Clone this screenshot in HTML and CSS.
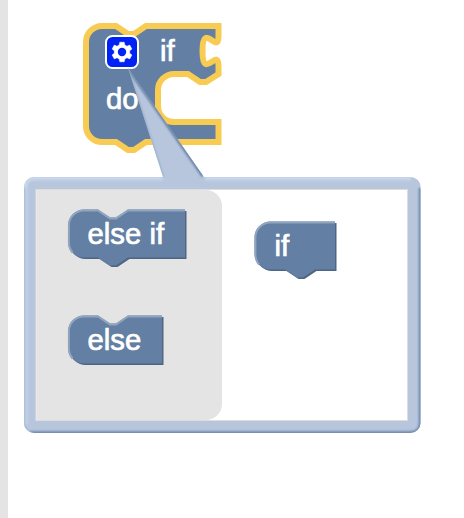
FILE: index.html
```
<!DOCTYPE html>
<html lang="en">
<head>
<meta charset="utf-8">
<title>Block editor</title>
<link rel="stylesheet" href="styles.css">
</head>
<body>
<svg class="workspace" width="464" height="518" viewBox="0 0 464 518">
  <defs>
    <path id="elseif" d="M68 225.500a16 16 0 0 1 16-16H98l12 8h6l12-8H185V257.500H128l-12 8h-6l-12-8H84a16 16 0 0 1-16-16z"/>
    <path id="else" d="M68 331.500a16 16 0 0 1 16-16H98l12 8h6l12-8H162V363.500H84a16 16 0 0 1-16-16z"/>
    <path id="if" d="M254.500 237.500a16 16 0 0 1 16-16H335V269.500H315l-12 8h-6l-12-8H270.500a16 16 0 0 1-16-16z"/>
    <path id="frame" d="M34 177H163L128 68L204 177H410a10 10 0 0 1 10.500 10V423a10 10 0 0 1-10 10H34a10 10 0 0 1-10-10V187a10 10 0 0 1 10-10z"/>
    <clipPath id="frame-clip"><use href="#frame"/></clipPath>
    <filter id="soft" x="-5%" y="-5%" width="110%" height="110%"><feGaussianBlur stdDeviation="1.1"/></filter>
  </defs>

  <rect class="flyout" x="0" y="0" width="8" height="518"/>

  <path class="block selected" d="M86 42a16 16 0 0 1 16-16H116l12 8h6l12-8H218.500V36c0 20-16-16-16 15s16-5 16 15V74l-12.500 8h-6l-12-8H174a16 16 0 0 0-16 16V106a16 16 0 0 0 16 16H218.500V142H146l-12 8h-6l-12-8H102a16 16 0 0 1-16-16z"/>
  <text class="label" x="160" y="61">if</text>
  <text class="label" x="106" y="109">do</text>

  <rect class="icon-box" x="106" y="36" width="32" height="32" rx="6.500"/>
  <g transform="translate(122 52)">
    <path class="gear" d="M-2.200-9.800H2.200L2.800-7L5-5.800L7.700-6.900L9.900-3L7.700-1.200V1.200L9.900 3L7.700 6.900L5 5.800L2.800 7L2.200 9.800H-2.200L-2.800 7L-5 5.800L-7.700 6.900L-9.900 3L-7.700 1.200V-1.200L-9.900-3L-7.700-6.900L-5-5.800L-2.800-7z"/>
    <circle class="gear-hole" r="4.200"/>
  </g>

  <use class="bubble" href="#frame"/>
  <g clip-path="url(#frame-clip)">
    <path class="shine" d="M25 425V187q0-9 9-9H163M205 178H411"/>
    <path class="shade" d="M30 433H410q10.500 0 10.500-10V188"/>
    <path class="shade" d="M128 68L203 176"/>
    <path class="shade-thin" d="M128 68L163 177M24 188V423q0 10 10 10"/>
  </g>
  <rect class="mutator" x="36" y="189.500" width="371.500" height="231"/>
  <path class="flyout" d="M36.500 190H206a16 16 0 0 1 16 16V404a16 16 0 0 1-16 16H36.500z"/>

  <use class="block-dark" href="#elseif" x="1.500" y="1.500"/>
  <use class="block" href="#elseif"/>
  <path class="block-light" d="M72.500 252.500a16 16 0 0 1-3.600-11V225.500a15.100 15.100 0 0 1 15.100-15.100H98l12 8h6l12-8H185"/>
  <text class="label" x="87.500" y="244">else if</text>

  <use class="block-dark" href="#else" x="1.500" y="1.500"/>
  <use class="block" href="#else"/>
  <path class="block-light" d="M72.500 358.500a16 16 0 0 1-3.600-11V331.500a15.100 15.100 0 0 1 15.100-15.100H98l12 8h6l12-8H162"/>
  <text class="label" x="87.500" y="350">else</text>

  <use class="block-dark" href="#if" x="1.500" y="1.500"/>
  <use class="block" href="#if"/>
  <path class="block-light" d="M259 264.500a16 16 0 0 1-3.600-11V237.500a15.100 15.100 0 0 1 15.100-15.100H335"/>
  <text class="label" x="274.500" y="256">if</text>
</svg>
</body>
</html>
```
FILE: styles.css
```
body {
  margin: 0;
  background: #fff;
}
.workspace {
  display: block;
}
.flyout {
  fill: #e4e4e4;
}
.block {
  fill: #637fa3;
}
.selected {
  stroke: #f8cc52;
  stroke-width: 6;
}
.block-dark {
  fill: #4f6682;
}
.block-light {
  fill: none;
  stroke: #92a5bf;
  stroke-width: 2;
}
.label {
  fill: #fff;
  stroke: #fff;
  stroke-width: 0.7;
  font: 29.3px "Liberation Sans", sans-serif;
}
.icon-box {
  fill: #0022f5;
  stroke: #fff;
  stroke-width: 2;
}
.gear {
  fill: #fff;
  stroke: #fff;
  stroke-width: 0.5;
  stroke-linejoin: round;
}
.gear-hole {
  fill: #0022f5;
}
.bubble {
  fill: #b7c6dd;
}
.shine,
.shade,
.shade-thin {
  fill: none;
  filter: url(#soft);
}
.shine {
  stroke: #c8d6ea;
  stroke-width: 5;
}
.shade {
  stroke: #6a83a9;
  stroke-width: 3.5;
}
.shade-thin {
  stroke: #8fa5c7;
  stroke-width: 1.5;
}
.mutator {
  fill: #fff;
  stroke: #dddddd;
  stroke-width: 1;
}
```
